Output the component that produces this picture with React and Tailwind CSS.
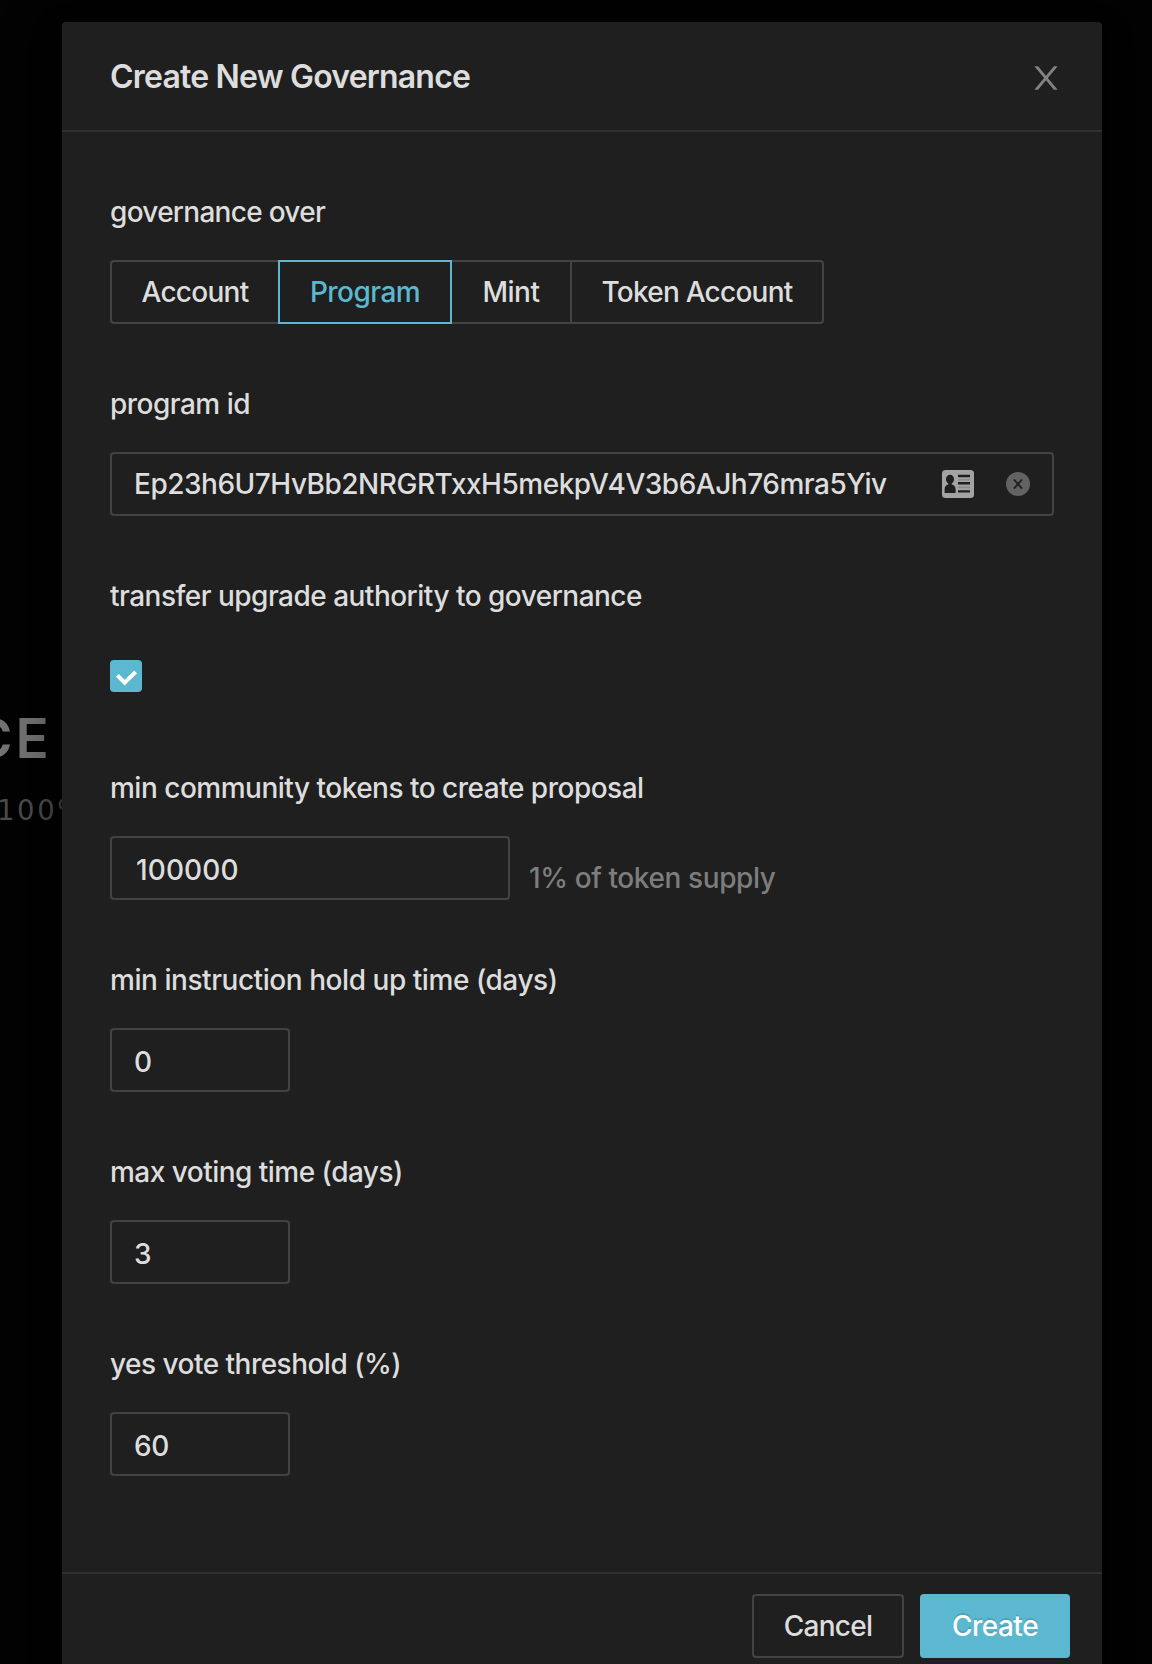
const CLOSE_PATH =
  'M563.8 512l262.5-312.9c4.4-5.2.7-13.1-6.1-13.1h-79.8c-4.7 0-9.2 2.1-12.3 5.7L511.6 449.8 295.1 191.7c-3-3.6-7.5-5.7-12.3-5.7H203c-6.8 0-10.5 7.9-6.1 13.1L459.4 512 196.9 824.9A7.95 7.95 0 0 0 203 838h79.8c4.7 0 9.2-2.1 12.3-5.7l216.5-258.1 216.5 258.1c3 3.6 7.5 5.7 12.3 5.7h79.8c6.8 0 10.5-7.9 6.1-13.1L563.8 512z';

function ContactIcon() {
  return (
    <svg width="32" height="28" viewBox="0 0 32 28">
      <rect width="32" height="28" rx="3.5" fill="#a3a3a3" />
      <ellipse cx="8" cy="9.3" rx="4" ry="4.5" fill="#1f1f1f" />
      <path d="M6.3 12h3.4v2.4c2.6.5 3.9 2.2 3.9 5V23H2.6v-3.6c0-2.8 1.2-4.5 3.7-5z" fill="#1f1f1f" />
      <path d="M16 6h12M16 13.3h12M16 21.4h12" stroke="#1f1f1f" strokeWidth="2.4" />
      <path d="M16 9.7h12M16 17.4h12" stroke="#8c8c8c" strokeWidth="1.6" />
    </svg>
  );
}

function ClearIcon() {
  return (
    <svg width="24" height="24" viewBox="0 0 24 24">
      <circle cx="12" cy="12" r="12" fill="#636363" />
      <path d="M8 7.5l8 9.2M16 7.5l-8 9.2" stroke="#1f1f1f" strokeWidth="1.9" />
    </svg>
  );
}

function Field({ label, spacing = 'tracking-[-0.52px]', children }) {
  return (
    <div className="mb-12">
      <label className={'flex h-16 items-center whitespace-nowrap ' + spacing}>{label}</label>
      <div className="mt-4 flex h-16 items-center">{children}</div>
    </div>
  );
}

function NumberBox({ value, width = 'w-[180px]', pad = 'pl-[22px]', spacing = 'tracking-[-0.3px]' }) {
  return (
    <div className={'flex h-16 items-center rounded-[4px] border-2 border-[#434343] pt-[3px] ' + width + ' ' + pad + ' ' + spacing}>
      {value}
    </div>
  );
}

export default function App() {
  return (
    <div className="relative h-[1664px] w-[1152px] overflow-hidden bg-[#030303] font-['Inter',sans-serif] text-[28px] font-[450] leading-[44px] text-[#dddddd]">
      <div className="absolute left-0 top-[698px] w-[62px] overflow-hidden">
        <div className="-ml-[28px] h-20 whitespace-nowrap text-[55px] font-semibold leading-[80px] tracking-[3px] text-[#737373]">CE</div>
        <div className="-ml-[3px] mt-[12px] h-10 whitespace-nowrap font-['DejaVu_Sans',sans-serif] text-[27.5px] leading-10 tracking-[2.6px] text-[#4c4c4c]">100%</div>
      </div>

      <div className="relative ml-[62px] mt-[22px] h-[1700px] w-[1040px] rounded-[4px] bg-[#1f1f1f] shadow-[0_6px_12px_-8px_rgba(0,0,0,0.48),0_12px_32px_0_rgba(0,0,0,0.32),0_18px_56px_16px_rgba(0,0,0,0.2)]">
        <header className="flex h-[110px] items-center justify-between border-b-2 border-[#303030] pl-12 pr-10">
          <h1 className="pt-[2px] text-[32px] font-semibold leading-[44px] tracking-[-0.8px]">Create New Governance</h1>
          <svg className="mt-[4px]" width="32" height="32" viewBox="64 64 896 896" fill="#828282">
            <path d={CLOSE_PATH} />
          </svg>
        </header>

        <main className="h-[1440px] px-12 pt-12">
          <Field label="governance over" spacing="tracking-[-0.72px]">
            <div className="flex h-16 w-[168px] items-center justify-center rounded-l-[4px] border-2 border-r-0 border-[#434343] tracking-[-0.75px]">Account</div>
            <div className="flex h-16 w-[174px] items-center justify-center border-2 border-[#5bb8d0] tracking-[-0.55px] text-[#5bb8d0]">Program</div>
            <div className="flex h-16 w-[120px] items-center justify-center border-y-2 border-r-2 border-[#434343] tracking-[-0.5px]">Mint</div>
            <div className="flex h-16 w-[252px] items-center justify-center rounded-r-[4px] border-2 border-l-0 border-[#434343] tracking-[-0.75px]">Token Account</div>
          </Field>
          <Field label="program id">
            <div className="flex h-16 w-[944px] items-center rounded-[4px] border-2 border-[#434343] pl-[22px] pr-[22px]">
              <span className="flex-1 whitespace-nowrap tracking-[-0.485px]">Ep23h6U7HvBb2NRGRTxxH5mekpV4V3b6AJh76mra5Yiv</span>
              <span className="flex items-center gap-8">
                <ContactIcon />
                <ClearIcon />
              </span>
            </div>
          </Field>
          <Field label="transfer upgrade authority to governance">
            <div className="h-8 w-8 rounded-[4px] bg-[#5bb8d0]">
              <svg width="32" height="32" viewBox="0 0 32 32" fill="none">
                <path d="M7.4 15.4l7.3 7.3L25.6 11.8" stroke="#fff" strokeWidth="4" />
              </svg>
            </div>
          </Field>
          <Field label="min community tokens to create proposal" spacing="tracking-[-0.5px]">
            <NumberBox value="100000" width="w-[400px]" pad="pl-[24px]" spacing="tracking-[0.1px]" />
            <span className="ml-[19px] mt-5 tracking-[-0.4px] text-[#7d7d7d]">1% of token supply</span>
          </Field>
          <Field label="min instruction hold up time (days)" spacing="tracking-[-0.45px]">
            <NumberBox value="0" />
          </Field>
          <Field label="max voting time (days)">
            <NumberBox value="3" />
          </Field>
          <Field label="yes vote threshold (%)">
            <NumberBox value="60" />
          </Field>
        </main>

        <footer className="flex justify-end gap-4 border-t-2 border-[#303030] px-8 pt-5">
          <button className="flex h-16 w-[152px] items-center justify-center rounded-[4px] border-2 border-[#434343] tracking-[-0.7px]">Cancel</button>
          <button className="flex h-16 w-[150px] items-center justify-center rounded-[4px] bg-[#5bb8d0] tracking-[-0.5px] text-white [text-shadow:0_-2px_0_rgba(0,0,0,0.12)]">Create</button>
        </footer>
      </div>
    </div>
  );
}
